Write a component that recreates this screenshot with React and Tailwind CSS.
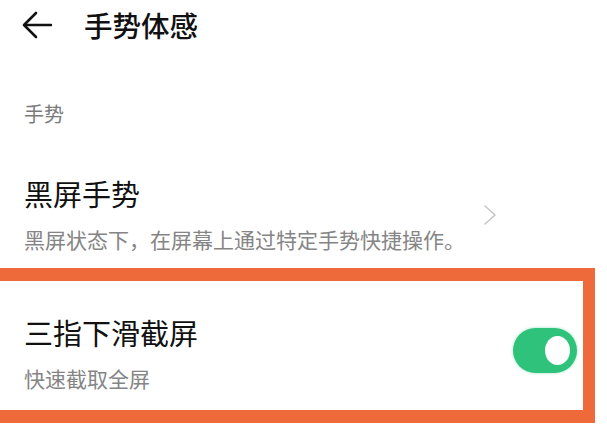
import React from 'react'

function BackArrow() {
  return (
    <svg width="30" height="28" viewBox="0 0 30 28" fill="none" stroke="#111" strokeWidth="2.6" strokeLinecap="round" strokeLinejoin="round">
      <path d="M29 14H3" />
      <path d="M14 2L2 14l12 12" />
    </svg>
  )
}

function Chevron() {
  return (
    <svg width="14" height="20" viewBox="0 0 14 20" fill="none" stroke="#c6c6c6" strokeWidth="1.6" strokeLinecap="round" strokeLinejoin="round">
      <path d="M2 1l10 9-10 9" />
    </svg>
  )
}

function Toggle() {
  return (
    <div className="w-[64px] h-[45px] rounded-full bg-[#2ec27b] flex items-center justify-end pr-[7px] shadow-[0_0_3px_rgba(46,194,123,0.5)]">
      <div className="w-[25px] h-[29px] rounded-[50%] bg-white" />
    </div>
  )
}

export default function App() {
  return (
    <div className="w-[607px] h-[448px] overflow-hidden bg-white font-['Noto_Sans_CJK_SC',sans-serif] text-[#111]">
      {/* header */}
      <div className="h-[50px] flex items-center pl-[22px]">
        <BackArrow />
        <h1 className="ml-[32px] text-[28.5px] leading-[28px] font-medium">手势体感</h1>
      </div>

      <div className="mt-[54px] pl-6 text-[20px] leading-[20px] text-[#7a7a7a]">手势</div>

      {/* 黑屏手势 */}
      <div className="mt-[55px] pl-6 flex items-center">
        <div className="flex-1">
          <div className="text-[29px] leading-[28px]">黑屏手势</div>
          <div className="mt-[22px] text-[21px] leading-[21px] text-[#858585]">黑屏状态下，在屏幕上通过特定手势快捷操作。</div>
        </div>
        <div className="mr-[110px]">
          <Chevron />
        </div>
      </div>

      {/* highlighted row */}
      <div className="mt-[18px] w-[595px] border-t-[13px] border-b-[13px] border-r-[12px] border-[#ef6a3b] h-[155px] flex">
        <div className="flex-1 pl-6 pt-[37px]">
          <div className="text-[29px] leading-[28px]">三指下滑截屏</div>
          <div className="mt-[22px] text-[21px] leading-[21px] text-[#858585]">快速截取全屏</div>
        </div>
        <div className="mt-[47px] mr-[6px]">
          <Toggle />
        </div>
      </div>
    </div>
  )
}
